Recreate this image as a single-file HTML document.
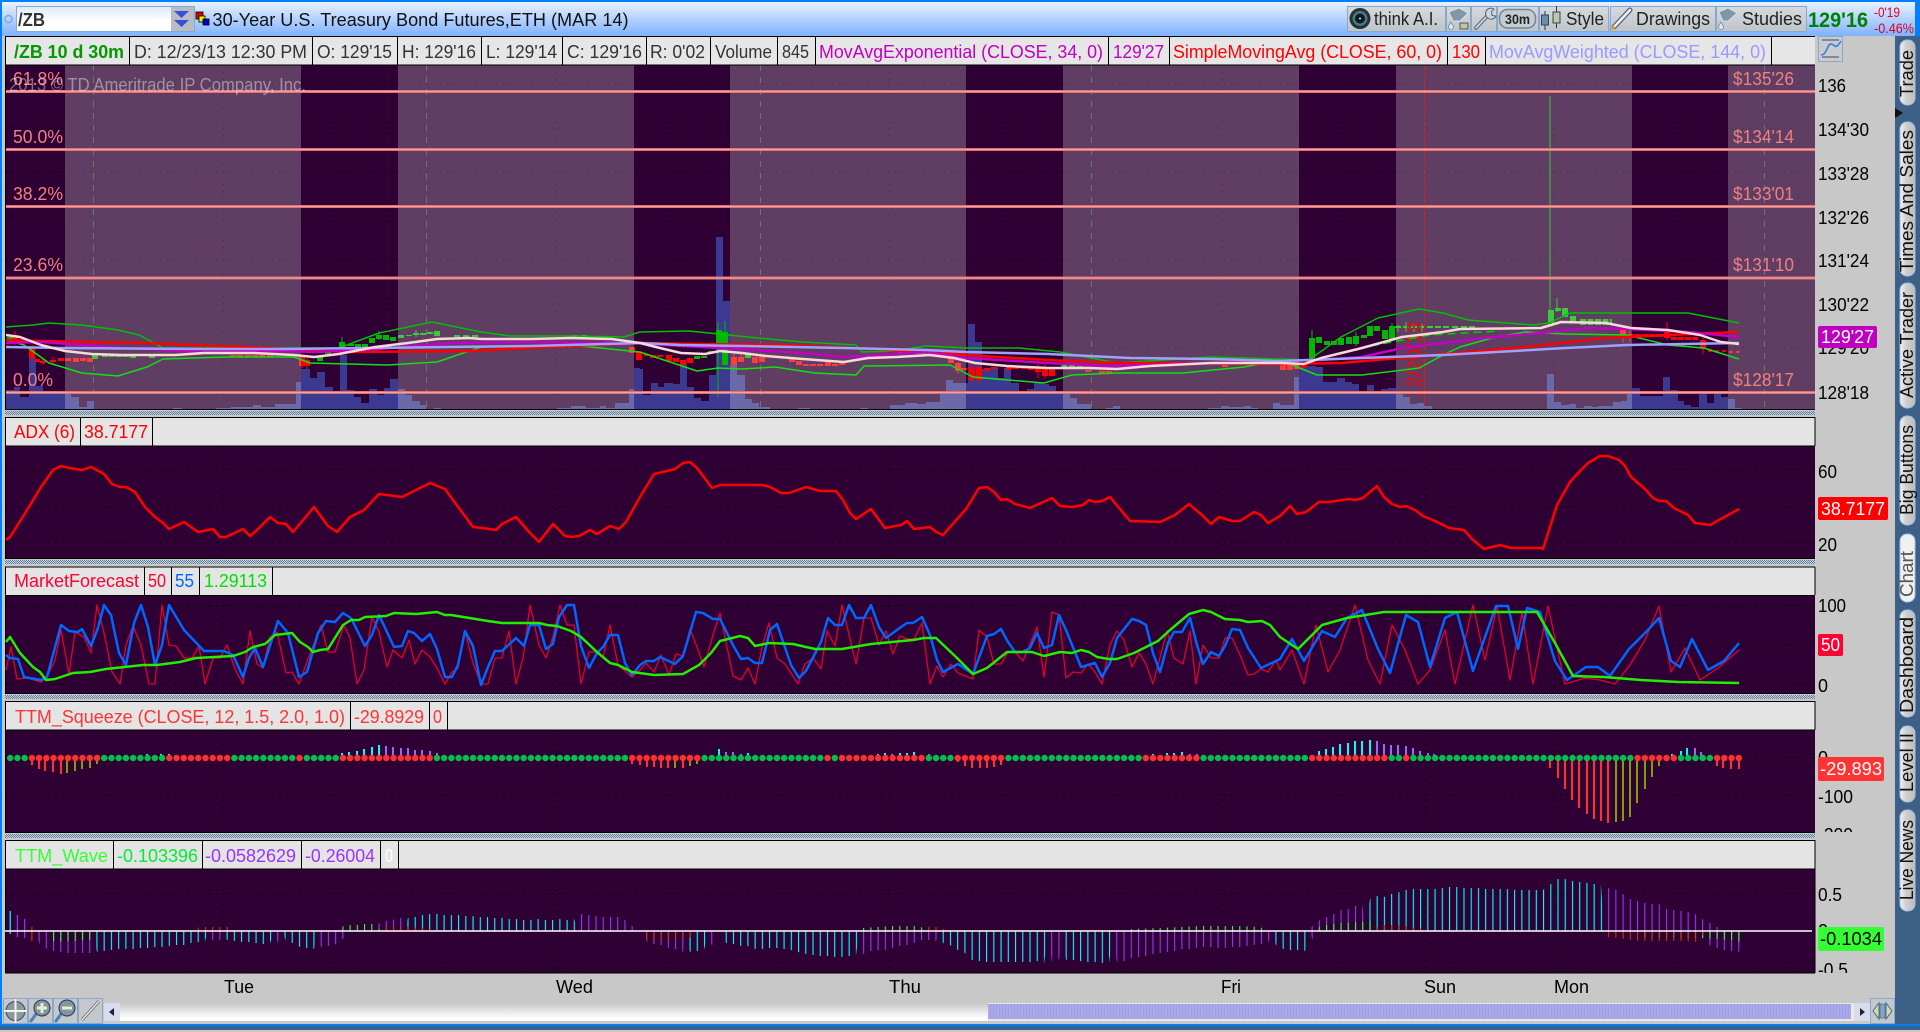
<!DOCTYPE html>
<html lang="en">
<head>
<meta charset="utf-8">
<title>/ZB 30-Year U.S. Treasury Bond Futures Chart</title>
<style>
html,body{margin:0;padding:0;width:1920px;height:1032px;overflow:hidden;background:#c8c8c8}
svg{display:block;position:absolute;left:0;top:0}
text{font-family:"Liberation Sans",sans-serif;font-size:18px}
.l{fill:none;stroke-linejoin:round}
.g{stroke:#000;stroke-width:1;stroke-dasharray:1.5 5.5;fill:none}
</style>
</head>
<body>
<svg width="1920" height="1032" viewBox="0 0 1920 1032" xmlns="http://www.w3.org/2000/svg">
<defs>
<linearGradient id="tb" x1="0" y1="0" x2="0" y2="1"><stop offset="0" stop-color="#e8f1ff"/><stop offset="1" stop-color="#7fb2ff"/></linearGradient>
<linearGradient id="btn" x1="0" y1="0" x2="0" y2="1"><stop offset="0" stop-color="#d6dade"/><stop offset="1" stop-color="#bfc4c8"/></linearGradient>
<linearGradient id="sym" x1="0" y1="0" x2="0" y2="1"><stop offset="0" stop-color="#dfe8f8"/><stop offset=".6" stop-color="#fff"/><stop offset="1" stop-color="#fff"/></linearGradient>
<linearGradient id="sb" x1="0" y1="0" x2="0" y2="1"><stop offset="0" stop-color="#c8c8c8"/><stop offset=".85" stop-color="#fff"/><stop offset="1" stop-color="#fff"/></linearGradient>
<linearGradient id="tab" x1="0" y1="0" x2="1" y2="0"><stop offset="0" stop-color="#f4f4f4"/><stop offset=".4" stop-color="#cfcfcf"/><stop offset="1" stop-color="#bdbdbd"/></linearGradient>
<pattern id="sash" patternUnits="userSpaceOnUse" width="2" height="2"><rect width="2" height="2" fill="#c8d0d8"/><rect width="1" height="1" fill="#5f7f9f"/><rect x="1" y="1" width="1" height="1" fill="#5f7f9f"/></pattern>
<pattern id="thumb" patternUnits="userSpaceOnUse" width="3" height="4"><rect width="3" height="4" fill="#a9a9ec"/><rect width="1" height="4" fill="#9f9fe0"/></pattern>
<pattern id="pc" patternUnits="userSpaceOnUse" x="9.6" width="7.233" height="10"><rect width="1.1" height="10" fill="#00ffff"/></pattern>
<pattern id="pv" patternUnits="userSpaceOnUse" x="9.6" width="7.233" height="10"><rect width="1.1" height="10" fill="#9933ff"/></pattern>
<pattern id="pg" patternUnits="userSpaceOnUse" x="9.6" width="7.233" height="10"><rect width="1.1" height="10" fill="#33ff33"/></pattern>
<pattern id="pr" patternUnits="userSpaceOnUse" x="9.6" width="7.233" height="10"><rect width="1.1" height="10" fill="#d03000"/></pattern>
<clipPath id="c1"><rect x="1816" y="730" width="78" height="102"/></clipPath>
<clipPath id="c2"><rect x="1816" y="869" width="78" height="104"/></clipPath>
</defs>

<!-- frame -->
<rect width="1920" height="1032" fill="#c8c8c8"/>
<rect x="1895" y="36" width="25" height="994" fill="#3f6086"/>
<rect x="0" y="0" width="1920" height="2" fill="#0080ff"/>
<rect x="0" y="2" width="1915" height="34" fill="url(#tb)"/>
<rect x="1915" y="2" width="5" height="34" fill="#0080ff"/>
<rect x="0" y="0" width="2" height="1026" fill="#0080ff"/>
<rect x="0" y="1024" width="1920" height="2" fill="#0080ff"/>
<rect x="0" y="1026" width="1920" height="4" fill="#3f6086"/>
<rect x="0" y="1030" width="1920" height="2" fill="#c8c8c8"/>

<!-- toolbar left -->
<circle cx="8.5" cy="19" r="3.5" fill="none" stroke="#7fa8e0" stroke-width="1.5"/>
<rect x="16.5" y="6.5" width="178" height="25" fill="url(#sym)" stroke="#88a8cc"/>
<text x="18" y="26" font-weight="bold" fill="#333" textLength="27" lengthAdjust="spacingAndGlyphs">/ZB</text>
<rect x="171" y="7" width="23" height="24" fill="#b8bcc4"/>
<path d="M174 11h15l-7.500 7zM174 20h15l-7.500 7z" fill="#3a4fd8"/>
<rect x="196" y="12" width="7" height="7" fill="#e00000" stroke="#000" stroke-width=".8"/>
<rect x="199" y="16" width="6" height="6" fill="#f0f000" stroke="#000" stroke-width=".8"/>
<rect x="203" y="19" width="6" height="6" fill="#0000d0" stroke="#000" stroke-width=".8"/>
<text x="212.500" y="26" fill="#111" textLength="416" lengthAdjust="spacingAndGlyphs">30-Year U.S. Treasury Bond Futures,ETH (MAR 14)</text>

<!-- toolbar right -->
<g stroke="#88a8cc" fill="url(#btn)">
<rect x="1347.500" y="6.500" width="98" height="25"/>
<rect x="1446.500" y="6.500" width="24" height="25"/>
<rect x="1471.500" y="6.500" width="25" height="25"/>
<rect x="1497.500" y="6.500" width="41" height="25"/>
<rect x="1539.500" y="6.500" width="69" height="25"/>
<rect x="1610.500" y="6.500" width="105" height="25"/>
<rect x="1716.500" y="6.500" width="90" height="25"/>
</g>
<circle cx="1360" cy="18.500" r="10.500" fill="#22313a"/>
<circle cx="1360" cy="18.500" r="7.500" fill="#4a7a80"/>
<circle cx="1360" cy="18.500" r="5" fill="#0d1a20"/>
<circle cx="1360" cy="18.500" r="1" fill="#bfe"/>
<text x="1374" y="25" fill="#222" textLength="64" lengthAdjust="spacingAndGlyphs">think A.I.</text>
<polygon points="1449,12 1459,8 1468,13 1460,21 1453,21" fill="#7f97a8" stroke="#dfe8ee" stroke-width=".8"/>
<path d="M1451 22c-2 3-2.500 4-2.500 5a2.500 2.500 0 0 0 5 0c0-1-.5-2-2.500-5z" fill="#d8e8f0" stroke="#789" stroke-width=".8"/>
<rect x="1460" y="23" width="8" height="6" fill="#b8c8a0" stroke="#556"/>
<path d="M1476 28L1488 15" stroke="#678" stroke-width="4" stroke-linecap="round"/>
<path d="M1476 28L1488 15" stroke="#dde" stroke-width="1.500" stroke-linecap="round"/>
<path d="M1494 9a5.500 5.500 0 1 0 2 7l-4-.5-.5-4z" fill="#cfd6dc" stroke="#567"/>
<rect x="1499.500" y="9.500" width="36" height="18.500" rx="8" fill="#c4ccd2" stroke="#6f8699" stroke-width="1.500"/>
<text x="1505" y="24" font-weight="bold" style="font-size:14px" fill="#222" textLength="25" lengthAdjust="spacingAndGlyphs">30m</text>
<path d="M1545 11v19M1556.500 6v22" stroke="#334" stroke-width="1"/>
<rect x="1541.500" y="15" width="7" height="10" fill="#6a90b0" stroke="#345"/>
<rect x="1553" y="12" width="7" height="11" fill="#bcc8a8" stroke="#345"/>
<text x="1566" y="25" fill="#222" textLength="38" lengthAdjust="spacingAndGlyphs">Style</text>
<path d="M1614 27L1630 10" stroke="#567" stroke-width="5" stroke-linecap="round"/>
<path d="M1614 27L1630 10" stroke="#eef" stroke-width="2.500" stroke-linecap="round"/>
<circle cx="1613" cy="28" r="2" fill="#e0a030"/>
<text x="1636" y="25" fill="#222" textLength="74" lengthAdjust="spacingAndGlyphs">Drawings</text>
<polygon points="1719,12 1728,8 1737,13 1728,21 1723,21" fill="#7f97a8" stroke="#dfe8ee" stroke-width=".8"/>
<path d="M1721 22c-2 3-2.500 4-2.500 5a2.500 2.500 0 0 0 5 0c0-1-.5-2-2.500-5z" fill="#d8e8f0" stroke="#789" stroke-width=".8"/>
<text x="1742" y="25" fill="#222" textLength="60" lengthAdjust="spacingAndGlyphs">Studies</text>
<text x="1808" y="27" font-weight="bold" style="font-size:21px" fill="#008000" textLength="60" lengthAdjust="spacingAndGlyphs">129'16</text>
<text x="1874" y="17" style="font-size:14px" fill="#e00020" textLength="26" lengthAdjust="spacingAndGlyphs">-0'19</text>
<text x="1874" y="33" style="font-size:14px" fill="#e00020" textLength="40" lengthAdjust="spacingAndGlyphs">-0.46%</text>

<!-- main panel background -->
<rect x="5" y="65" width="1810" height="344" fill="#2f0033"/>
<g class="g">
<path d="M6 84H1815M6 128H1815M6 172H1815M6 216H1815M6 260H1815M6 304H1815M6 348H1815"/>
<path d="M223.500 65V409M556.500 65V409M889.500 65V409M1222.500 65V409M1554.500 65V409"/>
</g>
<path d="M93.500 65V409M426.500 65V409M760.500 65V409M1091.500 65V409M1764.500 65V409" stroke="#38503a" stroke-dasharray="6 6" fill="none"/>

<!-- volume -->
<path fill="#3c3a90" d="M6 409V390H14V387H20V397H29V358H36V386H43V391H65V393H71V397H79V407H87V401H94V409ZM173 409V408H182V409ZM216 409V408H231V407H253V405H261V407H275V404H296V382H301V369H310V378H317V372H325V387H333V391H340V355H347V390H354V397H361V403H369V389H377V395H384V388H390V379H398V389H405V395H412V401H420V405H426V409ZM434 409V408H441V409ZM557 409V408H571V406H586V408H600V406H606V408H615V403H629V389H634V368H640V369H643V395H651V383H658V387H664V383H673V384H680V363H687V387H694V398H701V401H709V375H716V237H723V301H730V365H737V375H745V399H752V403H759V407H770V409ZM798 409V408H810V409ZM860 409V408H868V409ZM890 409V405H905V403H917V404H926V402H940V392H946V380H953V383H968V324H975V342H982V369H990V368H998V378H1004V368H1011V383H1019V391H1027V389H1034V382H1042V384H1049V386H1056V391H1063V394H1070V398H1077V404H1091V409ZM1106 409V408H1113V406H1120V409ZM1208 409V408H1221V406H1229V407H1244V406H1251V408H1258V409ZM1273 409V403H1280V405H1294V377H1299V366H1316V367H1323V382H1337V378H1345V382H1352V384H1359V393H1367V385H1374V393H1381V389H1388V388H1396V393H1403V397H1410V404H1417V403H1425V406H1432V409ZM1547 409V374H1554V402H1561V405H1569V404H1576V408H1584V406H1592V407H1598V406H1613V402H1621V401H1627V392H1632V388H1640V396H1663V377H1670V390H1678V401H1684V405H1691V407H1699V392H1707V403H1714V393H1721V397H1728V399H1735V408H1742V409Z"/>

<!-- candle wicks -->
<path stroke="#ff0000" stroke-width="1" fill="none" d="M15 331V345M32 345V360M43 358V365M53 357V364M302 355V368M307 358V369M734 353V368M741 352V362M958 362V374M972 362V382M979 365V383M1038 360V378M1045 362V378M1630 330V342M1623 328V343M1667 322V340M1703 338V354"/>
<path stroke="#00b800" stroke-width="1" fill="none" d="M718 322V397M725 321V365M342 337V350M379 331V340M416 330V337M1312 330V360M1356 332V346M1392 323V340M1398 325V332M1406 322V332M1414 324V332M1422 324V332M1550 96V323M1557 298V312"/>

<!-- candles -->
<path stroke="#ff0000" stroke-width="6" fill="none" d="M15 335V343M32 348V358M37 359V362M43 361V363M53 360V362M61 358V361M68 358V361M76 358V362M83 358V361M90 358V362M302 357V366M307 360V366M233 355V357M240 355V357M248 355V357M255 355V357M262 355V357M270 355V357M632 347V353M639 352V360M647 354V356M653 355V358M660 355V357M669 355V361M676 358V362M683 360V365M690 358V363M734 357V365M741 357V362M755 357V363M762 357V362M792 358V362M799 361V365M806 364V366M813 364V366M820 364V366M828 362V366M835 364V366M842 363V365M951 358V363M958 363V371M964 368V370M972 367V380M979 367V380M987 368V371M994 367V369M1009 367V370M1016 367V369M1024 367V369M1031 367V370M1038 367V372M1045 367V376M1052 367V376M1088 370V372M1102 371V373M1109 371V373M1225 365V367M1283 365V370M1290 365V370M1297 365V369M1304 365V368M1623 330V335M1631 334V337M1638 334V337M1645 334V337M1652 334V337M1659 334V337M1667 332V338M1674 337V340M1681 337V340M1688 337V340M1695 337V340M1703 340V349"/>
<path stroke="#ff0000" stroke-width="3.500" fill="none" d="M1710 349V352M1717 350V353M1724 350V352M1731 351V353M1738 351V353"/>
<path stroke="#00b800" stroke-width="6" fill="none" d="M10 337V339M95 355V359M105 355V357M112 355V357M119 355V357M126 355V357M133 356V358M152 355V358M320 357V361M328 352V354M342 342V348M351 344V346M358 344V347M365 344V347M372 338V343M379 335V339M386 335V340M393 337V341M401 335V338M409 335V336M416 333V335M423 333V335M430 332V334M437 331V336M457 335V337M466 335V337M475 335V337M575 335V338M584 335V338M697 356V359M704 356V358M711 351V353M719 330V343M725 332V365M748 354V358M902 351V354M910 351V354M917 351V354M924 351V354M931 351V354M1064 363V367M1072 363V367M1080 366V368M1250 360V362M1258 360V362M1265 360V362M1273 360V362M1312 338V358M1319 337V343M1327 341V345M1334 341V345M1341 338V345M1349 337V344M1356 336V344M1364 335V338M1370 326V336M1377 326V331M1385 330V339M1392 326V339M1398 326V328M1406 326V328M1414 326V328M1422 326V328M1430 326V328M1438 326V328M1446 326V328M1455 326V328M1464 326V328M1472 326V328M1551 310V323M1558 308V311M1565 308V317M1573 316V321"/>
<path stroke="#00b800" stroke-width="6" stroke-dasharray="6 1.500" fill="none" d="M1580 322H1612"/>

<!-- session shading -->
<g fill="#fff" fill-opacity=".24">
<rect x="65" y="65" width="236" height="344"/>
<rect x="398" y="65" width="236" height="344"/>
<rect x="730" y="65" width="236" height="344"/>
<rect x="1063" y="65" width="236" height="344"/>
<rect x="1396" y="65" width="236" height="344"/>
<rect x="1728" y="65" width="87" height="344"/>
</g>
<path d="M1424.500 65V409" stroke="#e81818" stroke-dasharray="5 2" fill="none"/>
<!-- date text -->
<text transform="translate(1421,398) rotate(-90)" fill="#ff0000" style="font-size:20px" textLength="76" lengthAdjust="spacingAndGlyphs" x="0" y="0">12/20/13</text>

<!-- fib lines -->
<path d="M5 91.500H1815M5 149.500H1815M5 206.500H1815M5 278H1815M5 392.500H1815" stroke="#e07474" stroke-width="3" fill="none"/>
<path d="M5 91.500H1815M5 149.500H1815M5 206.500H1815M5 278H1815M5 392.500H1815" stroke="#f4a0a0" stroke-width="1" fill="none"/>

<g fill="#f08080">
<text x="13" y="85" textLength="50" lengthAdjust="spacingAndGlyphs">61.8%</text>
<text x="13" y="143" textLength="50" lengthAdjust="spacingAndGlyphs">50.0%</text>
<text x="13" y="200" textLength="50" lengthAdjust="spacingAndGlyphs">38.2%</text>
<text x="13" y="271" textLength="50" lengthAdjust="spacingAndGlyphs">23.6%</text>
<text x="13" y="386" textLength="40" lengthAdjust="spacingAndGlyphs">0.0%</text>
<text x="1733" y="85" textLength="61" lengthAdjust="spacingAndGlyphs">$135'26</text>
<text x="1733" y="143" textLength="61" lengthAdjust="spacingAndGlyphs">$134'14</text>
<text x="1733" y="200" textLength="61" lengthAdjust="spacingAndGlyphs">$133'01</text>
<text x="1733" y="271" textLength="61" lengthAdjust="spacingAndGlyphs">$131'10</text>
<text x="1733" y="386" textLength="61" lengthAdjust="spacingAndGlyphs">$128'17</text>
</g>
<text x="9" y="91" fill="#fff" fill-opacity=".42" textLength="297" lengthAdjust="spacingAndGlyphs">2013 © TD Ameritrade IP Company, Inc.</text>

<!-- bollinger bands -->
<polyline class="l" stroke="#00c000" stroke-width="1.500" points="6,327 33,325 49,323 82,325 118,330 139,335 163,348 286,348 339,348 379,333 432,322 481,332 510,336 571,336 624,337 640,332 689,331 709,333 758,338 803,342 856,345 862,352 893,351 926,346 966,348 1019,348 1060,352 1117,363 1211,357 1280,359 1309,360 1341,337 1378,318 1419,309 1443,313 1468,320 1533,325 1549,323 1570,313 1627,313 1688,313 1739,323"/>
<polyline class="l" stroke="#10e010" stroke-width="1.500" points="6,340 24,345 49,363 82,373 118,376 147,367 163,359 224,357 294,357 310,363 388,365 437,362 481,347 571,345 640,352 697,371 718,368 742,369 775,367 815,373 856,375 864,366 950,365 973,377 1044,383 1072,375 1117,373 1183,373 1244,367 1280,360 1317,375 1362,375 1419,368 1443,355 1460,347 1492,338 1525,332 1566,334 1627,335 1668,345 1704,348 1739,359"/>
<path class="l" stroke="#00d000" stroke-width="1.500" stroke-dasharray="8 5" d="M1320 358L1370 346L1430 335L1500 331"/>

<!-- moving averages -->
<polyline class="l" stroke="#ff0000" stroke-width="2.500" points="6,340 40,341 143,343 245,347 306,350 347,352 469,351 571,346 640,343 701,344 783,345 873,349 966,355 1048,360 1117,363 1170,363 1280,364 1341,363 1423,356 1525,347 1606,338 1668,335 1739,332"/>
<polyline class="l" stroke="#c400c4" stroke-width="2.500" points="6,343 41,342 82,345 122,348 204,352 286,351 314,352 367,350 449,343 531,342 640,343 681,346 722,348 803,353 844,357 926,352 966,358 1048,363 1109,366 1211,363 1280,361 1321,360 1362,357 1402,348 1443,343 1484,338 1541,333 1586,328 1627,329 1688,332 1739,337"/>
<polyline class="l" stroke="#a0a0ff" stroke-width="2.500" points="6,347 61,348 204,349 286,349 367,348 449,347 531,346 640,343 681,345 742,346 844,348 926,350 966,352 1048,354 1130,358 1211,359 1280,361 1362,358 1443,355 1566,348 1627,345 1739,343"/>
<polyline class="l" stroke="#f8d8d8" stroke-width="2.500" points="6,335 20,337 41,345 65,351 92,354 122,355 175,355 204,353 253,353 294,355 314,357 339,354 375,347 408,343 437,339 469,338 482,339 531,339 571,338 612,339 640,343 660,348 681,353 705,354 720,351 742,353 766,356 803,359 844,362 868,358 897,357 930,355 954,358 975,363 1007,366 1048,368 1089,368 1117,369 1150,366 1211,363 1280,363 1304,364 1321,358 1362,348 1402,337 1443,332 1460,329 1541,328 1561,322 1606,323 1631,328 1668,330 1700,335 1721,342 1739,344"/>

<!-- main header -->
<rect x="5" y="36" width="1810" height="29" fill="#e6e6e6"/>
<path d="M5 36.500H1815M5 65H1815M5.500 36V409M129.500 36V65M312.500 36V65M397.500 36V65M481.500 36V65M562.500 36V65M646.500 36V65M710.500 36V65M777.500 36V65M815.500 36V65M1108.500 36V65M1169.500 36V65M1447.500 36V65M1485.500 36V65M1771.500 36V65" stroke="#000" fill="none"/>
<text x="14" y="58" font-weight="bold" fill="#009900" textLength="110" lengthAdjust="spacingAndGlyphs">/ZB 10 d 30m</text>
<g fill="#333">
<text x="134" y="58" textLength="173" lengthAdjust="spacingAndGlyphs">D: 12/23/13 12:30 PM</text>
<text x="317" y="58" textLength="75" lengthAdjust="spacingAndGlyphs">O: 129'15</text>
<text x="402" y="58" textLength="74" lengthAdjust="spacingAndGlyphs">H: 129'16</text>
<text x="486" y="58" textLength="71" lengthAdjust="spacingAndGlyphs">L: 129'14</text>
<text x="567" y="58" textLength="75" lengthAdjust="spacingAndGlyphs">C: 129'16</text>
<text x="650" y="58" textLength="55" lengthAdjust="spacingAndGlyphs">R: 0'02</text>
<text x="715" y="58" textLength="57" lengthAdjust="spacingAndGlyphs">Volume</text>
<text x="782" y="58" textLength="27" lengthAdjust="spacingAndGlyphs">845</text>
</g>
<g fill="#c000c0">
<text x="819" y="58" textLength="284" lengthAdjust="spacingAndGlyphs">MovAvgExponential (CLOSE, 34, 0)</text>
<text x="1113" y="58" textLength="51" lengthAdjust="spacingAndGlyphs">129'27</text>
</g>
<g fill="#ff0000">
<text x="1173" y="58" textLength="269" lengthAdjust="spacingAndGlyphs">SimpleMovingAvg (CLOSE, 60, 0)</text>
<text x="1452" y="58" textLength="28" lengthAdjust="spacingAndGlyphs">130</text>
</g>
<text x="1489" y="58" fill="#9999ff" textLength="277" lengthAdjust="spacingAndGlyphs">MovAvgWeighted (CLOSE, 144, 0)</text>

<!-- chart style button -->
<rect x="1818.500" y="36.500" width="24" height="25" fill="#c8ccd0" stroke="#88a8cc"/>
<path d="M1822 40h17M1822 57h17" stroke="#445" fill="none"/>
<path d="M1821 55c6 0 6-11 10-11s4 7 10-3" stroke="#2a80d0" stroke-width="1.500" fill="none"/>

<!-- sashes -->
<rect x="5" y="411" width="1810" height="4" fill="url(#sash)"/>
<rect x="5" y="560" width="1810" height="4" fill="url(#sash)"/>
<rect x="5" y="695" width="1810" height="4" fill="url(#sash)"/>
<rect x="5" y="834" width="1810" height="4" fill="url(#sash)"/>
<path d="M5 409.500H1815M5 558.500H1815M5 693.500H1815M5 832.500H1815" stroke="#000" fill="none"/>

<!-- ADX panel -->
<rect x="5" y="417" width="1810" height="29" fill="#e4e4e4"/>
<rect x="5" y="446" width="1810" height="112" fill="#2f0033"/>
<path d="M5 417.500H1815M5 446H1815M5.500 417V558M1815 417V446M80.500 417V446M152.500 417V446" stroke="#000" fill="none"/>
<text x="14" y="438" fill="#ff0000" textLength="61" lengthAdjust="spacingAndGlyphs">ADX (6)</text>
<text x="84" y="438" fill="#ff0000" textLength="64" lengthAdjust="spacingAndGlyphs">38.7177</text>
<g class="g"><path d="M6 470H1815M6 507H1815M6 543H1815M223.500 446V558M556.500 446V558M889.500 446V558M1222.500 446V558M1424.500 446V558M1554.500 446V558"/></g>
<polyline class="l" stroke="#ff0000" stroke-width="2.500" points="6,540 10,537 24,515 41,487 53,470 61,466 69,468 82,470 91,467 104,474 112,484 120,487 126,487 135,492 145,507 155,517 163,523 169,529 184,522 198,532 213,529 220,537 226,537 243,529 250,536 257,530 270,517 278,523 286,524 293,532 314,507 328,526 337,532 350,517 364,510 379,494 402,497 430,483 445,489 453,500 473,527 482,528 496,530 502,524 516,517 530,533 539,542 553,524 565,536 571,537 579,536 590,530 597,534 610,526 619,529 626,522 640,497 654,474 675,469 683,463 690,462 697,468 712,488 720,485 762,485 770,487 781,493 789,493 806,487 820,491 836,491 843,500 850,513 856,519 871,509 885,528 901,525 907,521 914,529 930,527 936,532 943,535 966,509 979,488 987,487 994,492 1001,500 1007,499 1015,504 1030,508 1052,498 1060,506 1072,507 1083,505 1089,500 1095,502 1102,501 1110,497 1130,521 1160,522 1175,515 1189,504 1203,516 1211,524 1219,517 1232,521 1240,521 1254,512 1261,515 1268,523 1280,516 1290,506 1297,514 1306,512 1319,502 1329,502 1349,499 1355,500 1363,498 1377,486 1384,497 1392,504 1400,507 1406,506 1415,510 1423,516 1435,521 1449,528 1464,530 1472,539 1484,549 1500,545 1511,548 1541,548 1543,549 1557,505 1570,482 1580,471 1588,463 1600,456 1608,456 1619,460 1625,466 1631,477 1645,489 1653,498 1659,501 1666,501 1674,508 1688,515 1695,523 1710,525 1719,520 1739,509"/>

<!-- MarketForecast panel -->
<rect x="5" y="567" width="1810" height="28" fill="#e4e4e4"/>
<rect x="5" y="595" width="1810" height="98" fill="#2f0033"/>
<path d="M5 567H1815M5 595.500H1815M5.500 567V693M1815 567V595M144.500 567V595M171.500 567V595M199.500 567V595M272.500 567V595" stroke="#000" fill="none"/>
<text x="14" y="587" fill="#ff0033" textLength="125" lengthAdjust="spacingAndGlyphs">MarketForecast</text>
<text x="148" y="587" fill="#ff0033" textLength="18" lengthAdjust="spacingAndGlyphs">50</text>
<text x="175" y="587" fill="#0066ff" textLength="19" lengthAdjust="spacingAndGlyphs">55</text>
<text x="204" y="587" fill="#00e000" textLength="63" lengthAdjust="spacingAndGlyphs">1.29113</text>
<g class="g"><path d="M6 606H1815M6 645H1815M6 684H1815M223.500 595V693M556.500 595V693M889.500 595V693M1222.500 595V693M1424.500 595V693M1554.500 595V693"/></g>
<polyline class="l" stroke="#e00030" stroke-width="1.300" points="6,670 11,647 17,679 27,678 41,682 47,677 55,660 61,630 69,674 75,632 84,637 91,653 97,605 104,633 112,672 120,684 126,645 133,626 141,645 149,684 155,684 162,605 169,645 176,646 184,658 192,658 199,646 205,684 213,658 220,658 227,645 235,669 243,684 250,631 257,664 263,668 270,637 277,632 286,673 292,672 299,684 307,662 321,625 328,652 335,652 344,625 350,638 357,684 364,670 372,617 379,632 387,667 393,650 402,658 409,640 415,664 422,650 430,657 437,668 445,684 452,672 458,668 465,631 473,663 481,684 488,684 495,658 502,658 509,631 516,684 523,658 530,605 539,645 546,658 553,637 560,605 567,625 574,625 581,684 589,652 597,652 603,658 610,625 618,665 632,677 640,670 646,663 654,672 661,655 669,675 676,654 683,656 690,629 697,647 704,667 713,635 720,613 733,676 741,680 748,668 755,684 762,647 769,623 777,658 785,664 798,684 805,664 813,658 821,669 827,631 835,646 842,605 856,664 864,618 871,618 879,645 886,631 893,654 900,636 907,639 914,639 922,623 930,684 937,666 943,677 951,664 958,673 973,679 979,630 987,637 994,664 1001,664 1008,652 1015,652 1023,661 1037,627 1044,677 1052,612 1059,615 1066,678 1073,672 1081,673 1088,664 1095,672 1102,684 1110,645 1117,631 1124,640 1132,667 1139,653 1146,664 1153,684 1167,631 1174,658 1183,664 1190,631 1196,684 1203,645 1211,658 1219,658 1225,638 1232,638 1240,655 1248,675 1254,674 1261,669 1268,672 1276,660 1280,670 1292,650 1304,684 1316,625 1328,672 1340,650 1355,605 1368,660 1380,684 1392,625 1405,650 1418,684 1430,670 1445,630 1455,684 1473,605 1485,660 1497,606 1510,680 1522,612 1533,684 1548,606 1565,684 1585,678 1600,680 1615,684 1630,665 1645,640 1659,606 1671,672 1685,648 1700,680 1718,668 1739,650"/>
<polyline class="l" stroke="#0066ff" stroke-width="2.500" points="6,655 10,658 18,659 24,677 41,680 47,677 61,625 69,631 78,632 82,629 91,646 98,628 104,605 111,615 119,653 126,665 134,623 141,605 148,627 155,665 162,645 169,605 184,630 204,651 224,651 233,655 243,677 249,658 255,648 263,667 278,621 288,633 299,677 307,672 318,633 326,621 335,622 343,613 351,618 365,646 372,635 379,615 394,647 402,646 408,631 414,633 422,641 430,634 437,649 445,677 452,677 458,665 465,631 473,646 481,685 488,667 495,651 502,651 516,638 524,646 530,625 539,625 546,649 553,644 559,617 567,605 574,605 581,646 589,668 597,653 603,647 610,635 618,635 625,663 632,675 640,665 646,661 654,661 660,657 675,664 683,656 696,612 703,613 713,619 720,619 734,647 741,659 748,658 755,663 762,663 770,630 777,624 791,665 799,678 806,671 821,642 828,618 835,625 842,625 849,605 856,618 864,618 871,605 879,627 886,638 901,627 907,623 913,623 922,617 930,635 937,660 943,672 958,664 973,674 987,636 994,634 1001,629 1008,642 1015,652 1023,652 1030,648 1037,633 1044,648 1052,645 1059,615 1066,630 1081,667 1095,663 1102,677 1110,663 1117,638 1132,619 1139,621 1146,625 1153,653 1160,672 1168,643 1174,632 1182,632 1190,618 1197,645 1203,664 1211,652 1219,656 1225,646 1232,629 1240,630 1248,648 1261,668 1274,662 1280,659 1292,639 1304,661 1322,631 1335,637 1347,618 1362,610 1378,649 1390,673 1406,615 1418,622 1430,667 1445,618 1457,612 1473,671 1496,606 1508,606 1518,649 1527,608 1540,612 1555,661 1567,680 1586,667 1598,667 1610,676 1629,649 1647,631 1659,618 1671,661 1680,667 1692,639 1708,670 1724,661 1739,643"/>
<polyline class="l" stroke="#22ee00" stroke-width="2.500" points="6,642 10,637 20,653 33,667 40,672 46,680 55,679 73,673 90,672 106,669 143,665 157,665 180,662 196,658 233,656 245,652 253,647 265,644 275,635 292,633 300,642 308,647 313,652 320,650 328,649 343,625 351,620 359,620 365,617 386,616 394,613 416,614 437,612 445,615 451,615 488,621 502,623 539,623 547,625 557,626 571,631 581,637 597,652 610,663 618,665 632,672 654,675 683,674 699,665 711,653 720,641 740,636 748,638 755,646 769,643 793,644 815,649 842,649 871,644 913,640 924,638 936,638 956,657 973,674 987,668 1007,652 1032,652 1044,656 1060,652 1072,653 1081,650 1089,652 1097,657 1109,659 1117,659 1134,653 1158,641 1170,630 1189,614 1203,610 1211,612 1225,619 1240,620 1248,622 1262,621 1270,625 1280,637 1298,649 1322,625 1347,618 1384,612 1470,612 1537,612 1555,643 1573,676 1604,677 1641,680 1678,682 1739,683"/>

<!-- TTM Squeeze panel -->
<rect x="5" y="701" width="1810" height="29" fill="#e4e4e4"/>
<rect x="5" y="730" width="1810" height="102" fill="#2f0033"/>
<path d="M5 701.500H1815M5 730H1815M5.500 701V832M1815 701V730M350.500 701V730M429.500 701V730M447.500 701V730" stroke="#000" fill="none"/>
<text x="15" y="723" fill="#ff3333" textLength="330" lengthAdjust="spacingAndGlyphs">TTM_Squeeze (CLOSE, 12, 1.5, 2.0, 1.0)</text>
<text x="354" y="723" fill="#ff3333" textLength="70" lengthAdjust="spacingAndGlyphs">-29.8929</text>
<text x="433" y="723" fill="#ff3333" textLength="9" lengthAdjust="spacingAndGlyphs">0</text>
<g class="g"><path d="M6 758H1815M6 795H1815M223.500 730V832M556.500 730V832M889.500 730V832M1222.500 730V832M1424.500 730V832M1554.500 730V832"/></g>
<g fill="none" stroke-width="2">
<path stroke="#ff3030" d="M32 758V765M39 758V769M45 758V771M53 758V772M61 758V774M632 758V764M640 758V765M647 758V767M654 758V767M661 758V768M668 758V768M683 758V768M958 758V762M965 758V766M972 758V768M980 758V768M987 758V768M994 758V767M1001 758V765M1550 758V768M1558 758V778M1565 758V789M1572 758V800M1579 758V808M1587 758V814M1594 758V819M1601 758V821M1608 758V823M1717 758V766M1723 758V768M1731 758V769M1739 758V769"/>
<path stroke="#80a000" d="M67 758V773M75 758V771M82 758V769M90 758V768M97 758V764M675 758V768M690 758V766M697 758V764M1616 758V822M1623 758V821M1630 758V817M1637 758V803M1645 758V789M1652 758V777M1659 758V766M1001 758V762"/>
<path stroke="#00ffff" d="M147 758V754M161 758V754M169 758V754M342 758V753M349 758V752M357 758V751M364 758V749M372 758V747M379 758V745M719 758V749M748 758V753M878 758V754M885 758V753M900 758V753M907 758V753M914 758V752M1153 758V754M1167 758V753M1174 758V753M1182 758V752M1319 758V751M1326 758V749M1333 758V747M1340 758V744M1348 758V743M1355 758V741M1362 758V741M1370 758V740M1672 758V754M1681 758V751M1687 758V748"/>
<path stroke="#9966ff" d="M176 758V755M386 758V746M393 758V747M401 758V748M408 758V748M415 758V750M422 758V750M430 758V751M437 758V753M726 758V752M733 758V752M741 758V754M892 758V754M929 758V754M1190 758V754M1197 758V754M1204 758V755M1377 758V741M1384 758V744M1391 758V745M1398 758V745M1406 758V746M1413 758V748M1420 758V751M1428 758V753M1434 758V754M1695 758V748M1701 758V752"/>
</g>
<path fill="none" stroke-width="6.500" stroke-linecap="round" stroke-dasharray="0 7.233" stroke="#00c050" d="M10.200 758H24.800M104.200 758H162.200M234.400 758H292.400M306.800 758H335.800M436.900 758H625.100M704.600 758H820.400M834.800 758H834.900M928.800 758H950.600M1008.400 758H1138.700M1203.600 758H1305M1391.700 758H1399M1413.400 758H1630.500M1681 758H1710.100"/>
<path fill="none" stroke-width="6.500" stroke-linecap="round" stroke-dasharray="0 7.233" stroke="#ff3030" d="M31.900 758H97.100M169.300 758H227.300M299.500 758H299.600M342.900 758H429.800M632.200 758H697.400M827.500 758H827.600M842 758H921.700M957.700 758H1001.200M1145.800 758H1196.500M1312.100 758H1384.600M1406.200 758H1406.300M1637.600 758H1673.900M1717.100 758H1739"/>

<!-- TTM Wave panel -->
<rect x="5" y="840" width="1810" height="29" fill="#e4e4e4"/>
<rect x="5" y="869" width="1810" height="104" fill="#2f0033"/>
<path d="M5 840.500H1815M5 869H1815M5 973H1815M5.500 840V973M1815 840V973M113.500 840V869M202.500 840V869M301.500 840V869M380.500 840V869M398.500 840V869" stroke="#000" fill="none"/>
<text x="15" y="862" fill="#33ff33" textLength="93" lengthAdjust="spacingAndGlyphs">TTM_Wave</text>
<text x="117" y="862" fill="#00ee33" textLength="81" lengthAdjust="spacingAndGlyphs">-0.103396</text>
<text x="205" y="862" fill="#9933ff" textLength="91" lengthAdjust="spacingAndGlyphs">-0.0582629</text>
<text x="305" y="862" fill="#9933ff" textLength="70" lengthAdjust="spacingAndGlyphs">-0.26004</text>
<text x="385" y="862" fill="#fff" textLength="8" lengthAdjust="spacingAndGlyphs">0</text>
<g class="g"><path d="M6 894H1815M6 968H1815M223.500 869V973M556.500 869V973M889.500 869V973M1222.500 869V973M1424.500 869V973M1554.500 869V973"/></g>

<!-- wave bars: first bars -->
<path fill="none" stroke-width="1.200" d="M10.200 911V934" stroke="#00ffff"/>
<path fill="none" stroke-width="1.200" d="M17.400 915V937M24.700 919V938" stroke="#9933ff"/>
<path fill="none" stroke-width="1.200" d="M31.900 927V941" stroke="#d03000"/>
<!-- violet -->
<polygon fill="url(#pv)" points="36,931 40,946 47,949 54,951 61,952 68,953 93,953 93,931"/>
<polygon fill="url(#pv)" points="209,931 213,941 220,940 223,931"/>
<polygon fill="url(#pv)" points="274,931 278,943 282,931"/>
<polygon fill="url(#pv)" points="317,931 321,947 328,946 336,944 343,939 347,931"/>
<polygon fill="url(#pv)" points="374,931 378,924 385,921 392,920 401,918 405,931"/>
<polygon fill="url(#pv)" points="578,931 580,914 588,915 595,916 602,917 610,917 618,917 625,920 632,926 640,931"/>
<polygon fill="url(#pv)" points="643,931 647,942 654,944 661,945 669,948 676,949 683,952 686,931"/>
<polygon fill="url(#pv)" points="708,931 712,946 716,931"/>
<polygon fill="url(#pv)" points="859,931 863,954 871,951 878,950 885,950 892,948 900,946 907,945 914,943 921,940 929,940 936,941 939,931"/>
<polygon fill="url(#pv)" points="1048,931 1052,962 1059,959 1063,931"/>
<polygon fill="url(#pv)" points="1113,931 1117,962 1124,961 1131,958 1138,957 1146,956 1153,954 1160,953 1167,952 1174,951 1182,949 1189,949 1196,948 1203,947 1211,947 1218,948 1225,948 1232,947 1240,947 1247,946 1254,945 1261,944 1268,943 1272,931"/>
<polygon fill="url(#pv)" points="1309,931 1313,925 1320,920 1327,917 1334,914 1341,910 1349,909 1355,906 1362,904 1366,931"/>
<polygon fill="url(#pv)" points="1604,931 1608,888 1616,890 1623,894 1630,899 1637,901 1645,903 1652,904 1659,904 1666,909 1673,910 1681,911 1688,912 1695,914 1702,919 1710,923 1717,927 1724,931"/>
<polygon fill="url(#pv)" points="1706,931 1710,946 1717,948 1724,950 1731,951 1739,952 1742,931"/>
<polygon fill="url(#pv)" points="1310,931 1313,941 1316,931"/>
<!-- cyan -->
<polygon fill="url(#pc)" points="94,931 97,952 104,951 111,950 119,949 126,949 133,949 140,948 148,948 155,947 162,947 169,946 176,945 184,945 191,943 199,942 205,941 208,931"/>
<polygon fill="url(#pc)" points="224,931 227,940 235,941 242,942 249,942 256,943 263,944 270,944 273,931"/>
<polygon fill="url(#pc)" points="283,931 286,942 293,943 300,947 307,948 314,949 317,931"/>
<polygon fill="url(#pc)" points="405,931 408,918 415,917 422,915 431,914 437,914 444,915 451,915 458,915 465,916 472,916 480,917 487,917 495,918 502,918 509,919 516,919 523,920 531,920 538,919 545,920 553,920 560,919 567,920 574,919 578,931"/>
<polygon fill="url(#pc)" points="686,931 690,952 697,951 704,950 708,931"/>
<polygon fill="url(#pc)" points="722,931 726,943 733,944 741,946 748,946 755,949 762,949 769,948 777,948 784,949 791,950 798,952 806,954 813,955 820,956 827,956 835,957 842,957 849,956 856,955 859,931"/>
<polygon fill="url(#pc)" points="939,931 943,943 950,945 958,950 965,953 972,960 979,961 986,962 994,962 1001,962 1008,962 1015,962 1023,962 1030,962 1037,961 1044,964 1048,931"/>
<polygon fill="url(#pc)" points="1063,931 1066,960 1073,960 1080,961 1088,962 1095,962 1102,963 1109,963 1113,931"/>
<polygon fill="url(#pc)" points="1272,931 1276,945 1283,949 1290,950 1297,950 1305,951 1309,931"/>
<polygon fill="url(#pc)" points="1366,931 1370,899 1377,896 1384,897 1391,894 1400,892 1406,890 1413,889 1420,889 1428,889 1435,889 1442,888 1449,887 1457,887 1464,888 1471,888 1478,888 1485,889 1493,889 1500,889 1507,889 1515,890 1522,890 1529,890 1536,890 1543,890 1551,884 1558,879 1565,879 1572,881 1580,882 1588,883 1594,884 1601,885 1604,931"/>
<!-- green / red overlays -->
<polygon fill="url(#pg)" points="50,931 52,941 58,942 90,940 94,931"/>
<polygon fill="url(#pg)" points="340,931 343,926 350,925 357,925 364,924 372,924 376,923 380,931"/>
<polygon fill="url(#pg)" points="860,931 863,928 890,926 920,926 926,931"/>
<polygon fill="url(#pg)" points="1128,931 1131,929 1160,928 1200,926 1240,926 1260,927 1268,931"/>
<polygon fill="url(#pg)" points="1316,931 1320,926 1340,923 1362,922 1372,921 1374,931"/>
<polygon fill="url(#pg)" points="1640,931 1645,938 1680,938 1700,938 1730,940 1740,942 1742,931"/>
<polygon fill="url(#pr)" points="195,931 199,927 230,927 234,931"/>
<polygon fill="url(#pr)" points="380,931 385,926 410,927 440,930 444,931"/>
<polygon fill="url(#pr)" points="644,931 647,942 654,942 661,941 669,941 690,938 693,931"/>
<polygon fill="url(#pr)" points="926,931 929,926 936,927 943,929 958,931"/>
<polygon fill="url(#pr)" points="1376,931 1378,925 1400,925 1422,929 1425,931"/>
<polygon fill="url(#pr)" points="1604,931 1608,937 1640,941 1680,941 1700,942 1704,931"/>
<path d="M5 931H1812" stroke="#fff" stroke-width="1.500" fill="none"/>

<!-- right axis -->
<g fill="#000">
<text x="1818" y="92" textLength="28" lengthAdjust="spacingAndGlyphs">136</text>
<text x="1818" y="136" textLength="51" lengthAdjust="spacingAndGlyphs">134'30</text>
<text x="1818" y="180" textLength="51" lengthAdjust="spacingAndGlyphs">133'28</text>
<text x="1818" y="224" textLength="51" lengthAdjust="spacingAndGlyphs">132'26</text>
<text x="1818" y="267" textLength="51" lengthAdjust="spacingAndGlyphs">131'24</text>
<text x="1818" y="311" textLength="51" lengthAdjust="spacingAndGlyphs">130'22</text>
<text x="1818" y="354" textLength="51" lengthAdjust="spacingAndGlyphs">129'20</text>
<text x="1818" y="399" textLength="51" lengthAdjust="spacingAndGlyphs">128'18</text>
<text x="1818" y="478" textLength="19" lengthAdjust="spacingAndGlyphs">60</text>
<text x="1818" y="551" textLength="19" lengthAdjust="spacingAndGlyphs">20</text>
<text x="1818" y="612" textLength="28" lengthAdjust="spacingAndGlyphs">100</text>
<text x="1818" y="692" textLength="10" lengthAdjust="spacingAndGlyphs">0</text>
<text x="1818" y="764" textLength="10" lengthAdjust="spacingAndGlyphs">0</text>
<text x="1818" y="803" textLength="35" lengthAdjust="spacingAndGlyphs">-100</text>
<text x="1818" y="841" clip-path="url(#c1)" textLength="35" lengthAdjust="spacingAndGlyphs">-200</text>
<text x="1818" y="901" textLength="24" lengthAdjust="spacingAndGlyphs">0.5</text>
<text x="1818" y="937" textLength="10" lengthAdjust="spacingAndGlyphs">0</text>
<text x="1818" y="976" clip-path="url(#c2)" textLength="30" lengthAdjust="spacingAndGlyphs">-0.5</text>
</g>
<!-- price bubbles -->
<rect x="1818" y="326" width="59" height="22" rx="2" fill="#c000c0"/>
<text x="1821" y="343" fill="#fff" textLength="53" lengthAdjust="spacingAndGlyphs">129'27</text>
<rect x="1818" y="497" width="70" height="23" rx="2" fill="#ff0000"/>
<text x="1821" y="515" fill="#fff" textLength="64" lengthAdjust="spacingAndGlyphs">38.7177</text>
<rect x="1818" y="634" width="25" height="22" rx="2" fill="#ff0033"/>
<text x="1821" y="651" fill="#fff" textLength="19" lengthAdjust="spacingAndGlyphs">50</text>
<rect x="1818" y="757" width="66" height="24" rx="2" fill="#ff3333"/>
<text x="1820" y="775" fill="#fff" textLength="62" lengthAdjust="spacingAndGlyphs">-29.893</text>
<rect x="1818" y="927" width="66" height="24" rx="2" fill="#33ff33"/>
<text x="1820" y="945" fill="#000" textLength="62" lengthAdjust="spacingAndGlyphs">-0.1034</text>

<!-- side tabs -->
<g fill="url(#tab)" stroke="#9fc0e8" stroke-width="1">
<rect x="1900" y="40" width="15" height="65" rx="7"/>
<rect x="1900" y="122" width="15" height="154" rx="7"/>
<rect x="1900" y="283" width="15" height="125" rx="7"/>
<rect x="1900" y="416" width="15" height="109" rx="7"/>
<rect x="1900" y="534" width="15" height="68" rx="7" fill="#f0f0f0"/>
<rect x="1900" y="610" width="15" height="107" rx="7"/>
<rect x="1900" y="726" width="15" height="76" rx="7"/>
<rect x="1900" y="810" width="15" height="101" rx="7"/>
</g>
<polygon points="1895,108 1903,113 1895,118" fill="#111"/>
<g fill="#111">
<text transform="translate(1913,97) rotate(-90)" textLength="47" lengthAdjust="spacingAndGlyphs">Trade</text>
<text transform="translate(1913,272) rotate(-90)" textLength="142" lengthAdjust="spacingAndGlyphs">Times And Sales</text>
<text transform="translate(1913,398) rotate(-90)" textLength="106" lengthAdjust="spacingAndGlyphs">Active Trader</text>
<text transform="translate(1913,515) rotate(-90)" textLength="90" lengthAdjust="spacingAndGlyphs">Big Buttons</text>
<text transform="translate(1913,597) rotate(-90)" textLength="46" lengthAdjust="spacingAndGlyphs" fill="#555">Chart</text>
<text transform="translate(1913,713) rotate(-90)" textLength="96" lengthAdjust="spacingAndGlyphs">Dashboard</text>
<text transform="translate(1913,792) rotate(-90)" textLength="59" lengthAdjust="spacingAndGlyphs">Level II</text>
<text transform="translate(1913,900) rotate(-90)" textLength="80" lengthAdjust="spacingAndGlyphs">Live News</text>
</g>

<!-- time axis -->
<g fill="#000">
<text x="224" y="993" textLength="30" lengthAdjust="spacingAndGlyphs">Tue</text>
<text x="556" y="993" textLength="37" lengthAdjust="spacingAndGlyphs">Wed</text>
<text x="889" y="993" textLength="32" lengthAdjust="spacingAndGlyphs">Thu</text>
<text x="1221" y="993" textLength="20" lengthAdjust="spacingAndGlyphs">Fri</text>
<text x="1424" y="993" textLength="32" lengthAdjust="spacingAndGlyphs">Sun</text>
<text x="1554" y="993" textLength="35" lengthAdjust="spacingAndGlyphs">Mon</text>
</g>

<!-- scrollbar -->
<rect x="120" y="1003" width="868" height="18" fill="url(#sb)"/>
<rect x="988" y="1003" width="866" height="18" fill="#e8e8ee"/>
<rect x="988" y="1004" width="863" height="15" fill="url(#thumb)"/>
<rect x="104" y="1003" width="16" height="18" fill="#d8dcec"/>
<polygon points="114,1008 109,1012 114,1016" fill="#223"/>
<rect x="1854" y="1003" width="16" height="18" fill="#d8dcec"/>
<polygon points="1860,1008 1865,1012 1860,1016" fill="#223"/>

<!-- bottom buttons -->
<g fill="#c4c8cc" stroke="#88a8cc">
<rect x="3.500" y="998.500" width="24" height="25"/>
<rect x="28.500" y="998.500" width="24" height="25"/>
<rect x="53.500" y="998.500" width="24" height="25"/>
<rect x="78.500" y="998.500" width="24" height="25"/>
<rect x="1870.500" y="998.500" width="24" height="25"/>
</g>
<circle cx="15.500" cy="1011" r="9.500" fill="#8a9aa0" stroke="#445"/>
<path d="M15.500 999V1023M4 1011H27" stroke="#f4f4e8" stroke-width="2" fill="none"/>
<path d="M36 1014L31 1021" stroke="#4a80c0" stroke-width="3" stroke-linecap="round" fill="none"/>
<circle cx="42" cy="1008" r="8" fill="#7f96a8" stroke="#334"/>
<path d="M42 1003V1013M37 1008H47" stroke="#e8f0c8" stroke-width="3" fill="none"/>
<path d="M61 1014L56 1021" stroke="#4a80c0" stroke-width="3" stroke-linecap="round" fill="none"/>
<circle cx="67" cy="1008" r="8" fill="#7f96a8" stroke="#334"/>
<path d="M62 1008H72" stroke="#e8f0c8" stroke-width="3" fill="none"/>
<path d="M82 1020L99 1001" stroke="#667" stroke-width="3" fill="none"/>
<path d="M82 1020L99 1001" stroke="#e8e8d0" stroke-width="1.500" fill="none"/>
<path d="M1873 1011L1879 1003V1019ZM1892 1011L1886 1003V1019Z" fill="#c8e0b8" stroke="#567"/>
<rect x="1880" y="1004" width="5" height="14" fill="#7fa8d0" stroke="#456" stroke-width=".6"/>
</svg>
</body>
</html>
